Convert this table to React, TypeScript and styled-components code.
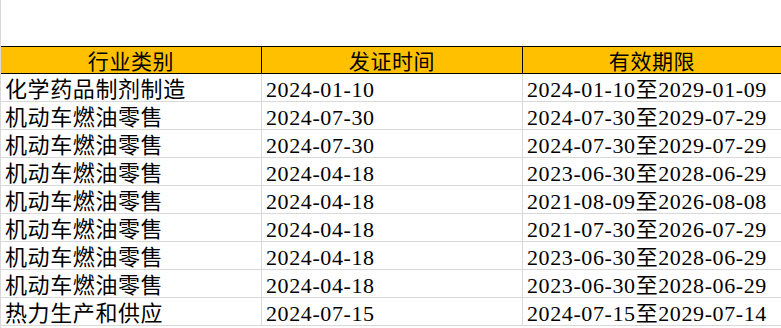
import styled, { createGlobalStyle } from "styled-components";

const GlobalStyle = createGlobalStyle`
body {
    margin: 0;
    background: #ffffff;
}
`

const Sheet = styled.div`
    padding-top: 46px;
    border-left: 1px solid #d9d9d9;
    width: 780px;
    height: 282px;
    overflow: hidden;
    font-family: "Liberation Serif", "Noto Sans CJK SC", serif;
    color: #000;
`

const Row = styled.div<{ $head?: boolean }>`
    display: grid;
    grid-template-columns: 261px 261px 1fr;
    height: 28px;
    box-sizing: border-box;
    background: ${(p) => (p.$head ? "#ffc000" : "#ffffff")};
    border-top: ${(p) => (p.$head ? "1px solid #000" : "none")};
    border-bottom: 1px solid ${(p) => (p.$head ? "#000" : "#d9d9d9")};
`

const Cell = styled.div<{ $head?: boolean }>`
    display: flex;
    align-items: flex-end;
    justify-content: ${(p) => (p.$head ? "center" : "flex-start")};
    padding: 0 0 0 ${(p) => (p.$head ? "0" : "4px")};
    border-right: 1px solid ${(p) => (p.$head ? "#000" : "#d9d9d9")};
    font-size: ${(p) => (p.$head ? "21px" : "22px")};
    line-height: 22px;
    letter-spacing: 0.6px;
    white-space: nowrap;
    overflow: hidden;
    &:last-child {
        border-right: none;
    }
`

interface IRow {
    kind: string,
    date: string,
    valid: string,
}

const rows: IRow[] = [
    { kind: "化学药品制剂制造", date: "2024-01-10", valid: "2024-01-10至2029-01-09" },
    { kind: "机动车燃油零售", date: "2024-07-30", valid: "2024-07-30至2029-07-29" },
    { kind: "机动车燃油零售", date: "2024-07-30", valid: "2024-07-30至2029-07-29" },
    { kind: "机动车燃油零售", date: "2024-04-18", valid: "2023-06-30至2028-06-29" },
    { kind: "机动车燃油零售", date: "2024-04-18", valid: "2021-08-09至2026-08-08" },
    { kind: "机动车燃油零售", date: "2024-04-18", valid: "2021-07-30至2026-07-29" },
    { kind: "机动车燃油零售", date: "2024-04-18", valid: "2023-06-30至2028-06-29" },
    { kind: "机动车燃油零售", date: "2024-04-18", valid: "2023-06-30至2028-06-29" },
    { kind: "热力生产和供应", date: "2024-07-15", valid: "2024-07-15至2029-07-14" },
]

function App() {
    return (
        <>
            <GlobalStyle />
            <Sheet>
                <Row $head>
                    <Cell $head>行业类别</Cell>
                    <Cell $head>发证时间</Cell>
                    <Cell $head>有效期限</Cell>
                </Row>
                {rows.map((r, i) => (
                    <Row key={i}>
                        <Cell>{r.kind}</Cell>
                        <Cell>{r.date}</Cell>
                        <Cell>{r.valid}</Cell>
                    </Row>
                ))}
            </Sheet>
        </>
    )
}

export default App;
